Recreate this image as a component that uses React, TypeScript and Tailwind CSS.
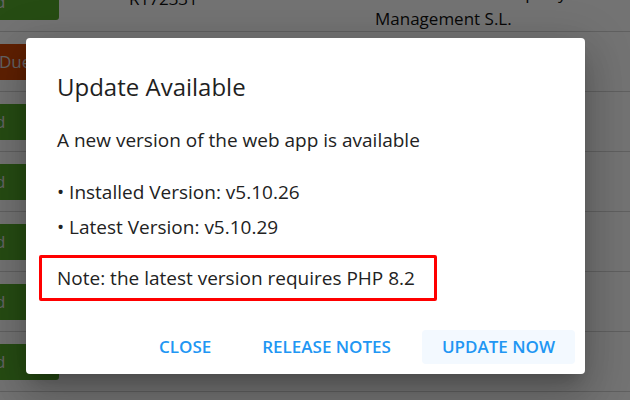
import React from "react";

const rows = [
  { status: "Paid", tone: "paid", ref: "R172331", company: ["Mediterranean Property", "Management S.L."] },
  { status: "Due", tone: "due", ref: "", company: [] },
  { status: "Paid", tone: "paid", ref: "", company: [] },
  { status: "Paid", tone: "paid", ref: "", company: [] },
  { status: "Paid", tone: "paid", ref: "", company: [] },
  { status: "Paid", tone: "paid", ref: "", company: [] },
  { status: "Paid", tone: "paid", ref: "", company: [] },
];

function InvoiceTable() {
  return (
    <div className="-mt-[28px] bg-white">
      {rows.map((row, i) => (
        <div
          key={i}
          className="flex h-[60px] items-start border-b border-[#d6d6d6]"
        >
          <div className="mt-[12px] w-[59px] shrink-0">
            {row.tone === "due" ? (
              <span className="-ml-[20px] flex h-[36px] w-[90px] items-center rounded-[3px] bg-[#d24708] pl-[19px] text-[17px] text-[#dcdcdc]">
                {row.status}
              </span>
            ) : (
              <span className="-ml-[40px] flex h-[36px] w-[99px] items-center rounded-[3px] bg-[#55a82a] pl-[11px] text-[17px] text-[#dcdcdc]">
                {row.status}
              </span>
            )}
          </div>
          <div className="ml-[70px] mt-[16px] w-[246px] shrink-0 text-[17px] leading-[22px] text-[#111]">
            {row.ref}
          </div>
          <div className="mt-[8px] flex flex-col whitespace-nowrap text-[17px] leading-[26px] text-[#111]">
            {row.company.map((line) => (
              <span key={line}>{line}</span>
            ))}
          </div>
        </div>
      ))}
    </div>
  );
}

export default function App() {
  return (
    <div
      className="relative h-[400px] w-[630px] overflow-hidden bg-white"
      style={{ fontFamily: '"Open Sans", "Noto Sans", sans-serif' }}
    >
      <InvoiceTable />
      <div className="absolute inset-0 bg-black/55" />
      <div className="absolute left-[26px] top-[38px] flex w-[559px] flex-col rounded-[4px] bg-white pb-[10px] pl-[31px] pr-[10px] pt-[33px] shadow-[0_11px_15px_-7px_rgba(0,0,0,0.2),0_24px_38px_3px_rgba(0,0,0,0.14),0_9px_46px_8px_rgba(0,0,0,0.12)]">
        <h2 className="text-[24px] font-medium leading-8 text-[#1f1f1f]">
          Update Available
        </h2>
        <p className="mt-[23px] text-[19px] leading-7 text-[#222]">
          A new version of the web app is available
        </p>
        <ul className="mt-[24px] flex flex-col gap-[7px] text-[19px] leading-7 text-[#222]">
          <li>• Installed Version: v5.10.26</li>
          <li>• Latest Version: v5.10.29</li>
        </ul>
        <div className="-ml-[18px] mr-[138px] mt-[14px] rounded-[2px] border-[3px] border-[#ff0000] py-[6px] pl-[15px] text-[19px] leading-7 text-[#222]">
          Note: the latest version requires PHP 8.2
        </div>
        <div className="mt-[29px] flex justify-end gap-[11px] text-[17px] font-semibold text-[#2196f3]">
          <button className="h-[34px] px-5 uppercase">Close</button>
          <button className="h-[34px] px-5 uppercase">Release Notes</button>
          <button className="h-[34px] rounded-[4px] bg-[#f3f9ff] px-5 uppercase">
            Update Now
          </button>
        </div>
      </div>
    </div>
  );
}
